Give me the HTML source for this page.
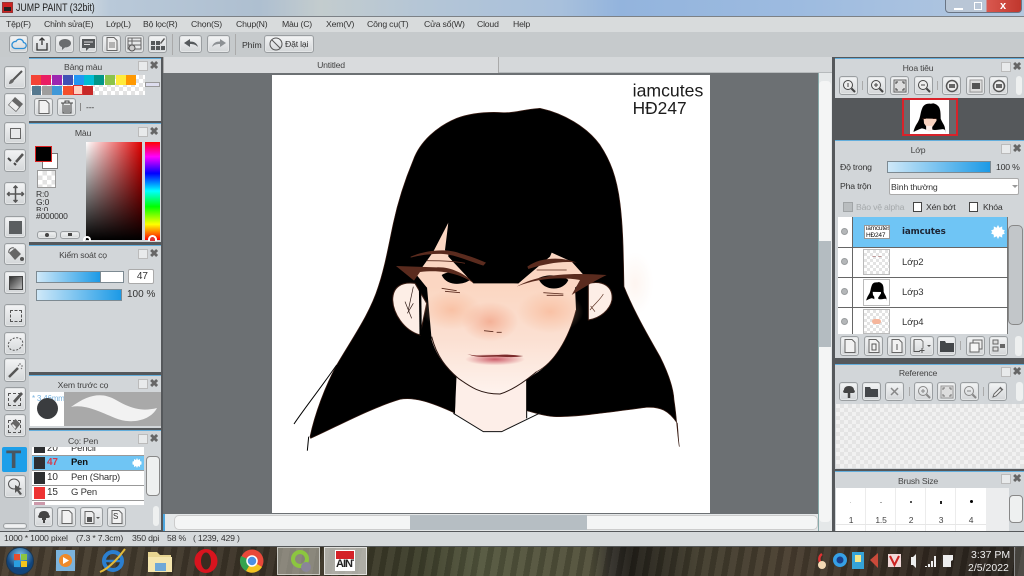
<!DOCTYPE html>
<html><head><meta charset="utf-8"><style>
*{box-sizing:border-box}
html,body{margin:0;padding:0;width:1024px;height:576px;overflow:hidden;background:#6c7073}
body{position:relative;font-family:"Liberation Sans",sans-serif;font-size:8.7px;letter-spacing:-.2px;color:#333;filter:blur(.3px)}
div,span,svg{position:absolute}
.b{border:1px solid #9a9ea1;border-radius:3px;background:linear-gradient(#f3f4f5,#d3d6d8);box-shadow:0 0 0 1px #e4e6e7 inset}
.t{white-space:nowrap}
.p{background:#d2d6d9;border-top:1px solid #63aedc}
.h{text-align:center;color:#444;white-space:nowrap}
.pi{width:10px;height:10px;border:1px solid #bbb;background:#e8eaeb}
.x{width:10px;height:10px;color:#666;font-size:11px;font-weight:bold;line-height:10px;text-align:center}
.ck{background:repeating-conic-gradient(#e3e3e3 0 25%,#fff 0 50%) 0 0/8px 8px}
.sl{border:1px solid #7d8a92;background:linear-gradient(90deg,#cfe8f8,#1c9ae6)}
.ln{width:1px;background:#aaa}
</style></head><body>

<!-- title bar -->
<div style="left:0;top:0;width:1024px;height:17px;background:linear-gradient(90deg,#cfd3d8 0,#c9d4dd 90px,#b9c9d9 110px,#aebfd0 260px,#c3ccce 320px,#b5c6d6 420px,#a8c0dc 560px,#93b4dd 620px,#9dbbe0 800px,#b4c8df 1024px);border-bottom:1px solid #7c8186"></div>
<div style="left:2px;top:2px;width:11px;height:11px;background:#c22;border:1px solid #933"></div>
<div style="left:4px;top:7px;width:7px;height:4px;background:#222"></div>
<div class="t" style="left:16px;top:2px;font-size:11px;letter-spacing:0;color:#222;transform:scaleX(.8);transform-origin:0 0">JUMP PAINT (32bit)</div>
<div style="left:945px;top:-1px;width:77px;height:14px;border:1px solid #6a7585;border-radius:0 0 4px 4px;background:linear-gradient(90deg,#b9c6d6 0,#b9c6d6 40px,#d9584f 41px,#c0372d 100%)"></div>
<div style="left:954px;top:8px;width:9px;height:2px;background:#fff"></div>
<div style="left:974px;top:2px;width:8px;height:8px;border:1px solid #fff"></div>
<div class="t" style="left:1000px;top:0;color:#fff;font-weight:bold;font-size:11px">x</div>

<!-- menu -->
<div style="left:0;top:17px;width:1024px;height:15px;background:#d8dbdc"></div>
<div class="t" style="left:6px;top:19px">Tệp(F)</div>
<div class="t" style="left:44px;top:19px">Chỉnh sửa(E)</div>
<div class="t" style="left:106px;top:19px">Lớp(L)</div>
<div class="t" style="left:143px;top:19px">Bộ lọc(R)</div>
<div class="t" style="left:191px;top:19px">Chọn(S)</div>
<div class="t" style="left:236px;top:19px">Chụp(N)</div>
<div class="t" style="left:282px;top:19px">Màu (C)</div>
<div class="t" style="left:326px;top:19px">Xem(V)</div>
<div class="t" style="left:367px;top:19px">Công cụ(T)</div>
<div class="t" style="left:424px;top:19px">Cửa sổ(W)</div>
<div class="t" style="left:477px;top:19px">Cloud</div>
<div class="t" style="left:513px;top:19px">Help</div>

<!-- toolbar -->
<div style="left:0;top:32px;width:1024px;height:25px;background:#c6cacc"></div>
<div class="b" style="left:9px;top:35px;width:19px;height:18px"><svg style="left:1px;top:2px" width="16" height="12" viewBox="0 0 16 12"><path d="M4 10.5h8a3 3 0 0 0 .5-6A4 4 0 0 0 5 3.5a3.3 3.3 0 0 0-1 7z" fill="none" stroke="#2f8fd6" stroke-width="1.3"/></svg></div>
<div class="b" style="left:32px;top:35px;width:19px;height:18px"><svg style="left:2px;top:1px" width="14" height="14" viewBox="0 0 14 14"><path d="M7 8V1M4.5 3.5L7 1l2.500 2.500M2 6v7h10V6" fill="none" stroke="#333" stroke-width="1.300"/></svg></div>
<div class="b" style="left:55px;top:35px;width:19px;height:18px"><svg style="left:2px;top:2px" width="14" height="13" viewBox="0 0 14 13"><path d="M7 1c3.500 0 6 1.800 6 4.200S10.500 9.400 7 9.400L4 12V9C2 8.400 1 7 1 5.200 1 2.800 3.500 1 7 1z" fill="#6a6d6f"/></svg></div>
<div class="b" style="left:79px;top:35px;width:18px;height:18px"><svg style="left:2px;top:2px" width="13" height="13" viewBox="0 0 13 13"><path d="M0 1h13v9H7l-3 3v-3H0z" fill="#55585a"/><path d="M2 4h9M2 6.500h6" stroke="#ddd"/></svg></div>
<div class="b" style="left:102px;top:35px;width:19px;height:18px"><svg style="left:3px;top:1px" width="12" height="14" viewBox="0 0 12 14"><path d="M1 .5h7l3 3v10H1z" fill="#eee" stroke="#666"/><path d="M3 6h6M3 8h6M3 10h6" stroke="#777"/></svg></div>
<div class="b" style="left:125px;top:35px;width:19px;height:18px"><svg style="left:1px;top:1px" width="16" height="15" viewBox="0 0 16 15"><path d="M1 1h13v11H1zM1 4h13M5 1v11M1 8h13" fill="#e6e8e9" stroke="#666"/><circle cx="5" cy="11" r="3" fill="#ccc" stroke="#555"/></svg></div>
<div class="b" style="left:148px;top:35px;width:19px;height:18px"><svg style="left:1px;top:1px" width="16" height="15" viewBox="0 0 16 15"><path d="M1 4h4v4H1zM6 4h4v4H6zM1 9h4v4H1zM6 9h4v4H6zM11 9h4v4h-4z" fill="#55585a"/><path d="M10 6l4-5 1 1-4 5z" fill="#555"/></svg></div>
<div class="ln" style="left:172px;top:34px;height:21px"></div>
<div class="b" style="left:179px;top:35px;width:23px;height:18px"><svg style="left:4px;top:3px" width="14" height="10" viewBox="0 0 14 10"><path d="M0 4L6 0v2.500c4 0 7 1.500 8 5.500-2-2-4-3-8-3V8z" fill="#55595c"/></svg></div>
<div class="b" style="left:207px;top:35px;width:23px;height:18px"><svg style="left:4px;top:3px" width="14" height="10" viewBox="0 0 14 10"><path d="M14 4L8 0v2.500C4 2.500 1 4 0 8c2-2 4-3 8-3v3z" fill="#8d9194"/></svg></div>
<div class="ln" style="left:235px;top:34px;height:21px"></div>
<div class="t" style="left:242px;top:40px">Phím</div>
<div class="b" style="left:264px;top:35px;width:50px;height:18px"><svg style="left:4px;top:1px" width="14" height="14" viewBox="0 0 14 14"><circle cx="7" cy="7" r="6" fill="none" stroke="#555"/><path d="M3 3l8 8" stroke="#555"/></svg><span class="t" style="left:20px;top:3px">Đặt lại</span></div>

<!-- left column -->
<div style="left:0;top:57px;width:29px;height:474px;background:#c7cbce"></div>
<div style="left:29px;top:57px;width:134px;height:474px;background:#55585b"></div>

<!-- tools -->
<div class="b" style="left:4px;top:66px;width:22px;height:23px"><svg style="left:1px;top:1px" width="19" height="19" viewBox="0 0 19 19"><path d="M7 12L16 3" stroke="#555" stroke-width="2"/><path d="M3 16c0-3 2-5 4-5l1 1c0 2-2 4-5 4z" fill="#666"/></svg></div>
<div class="b" style="left:4px;top:93px;width:22px;height:23px"><svg style="left:1px;top:2px" width="19" height="18" viewBox="0 0 19 18"><path d="M9 1l8 7-7 8-8-7z" fill="#666"/><path d="M6 5l7 6-3 4-7-6z" fill="#eee"/></svg></div>
<div class="b" style="left:4px;top:122px;width:22px;height:22px"><div style="left:5px;top:5px;width:11px;height:11px;border:1px solid #666;background:#e8e9ea"></div></div>
<div class="b" style="left:4px;top:149px;width:22px;height:23px"><svg style="left:1px;top:1px" width="19" height="19" viewBox="0 0 19 19"><path d="M2 7l3 3M8 12l2 2" stroke="#444" stroke-width="2"/><path d="M10 11l7-8" stroke="#555" stroke-width="2.500"/></svg></div>
<div class="b" style="left:4px;top:182px;width:22px;height:23px"><svg style="left:1px;top:2px" width="19" height="18" viewBox="0 0 19 18"><path d="M9.500 1v16M1.500 9h16M7.500 3l2-2 2 2M7.500 15l2 2 2-2M3.500 7l-2 2 2 2M15.500 7l2 2-2 2" fill="none" stroke="#555" stroke-width="1.500"/></svg></div>
<div class="b" style="left:4px;top:216px;width:22px;height:22px"><div style="left:4px;top:4px;width:13px;height:13px;background:#5b5e60"></div></div>
<div class="b" style="left:4px;top:243px;width:22px;height:22px"><svg style="left:1px;top:1px" width="19" height="19" viewBox="0 0 19 19"><path d="M3 8l6-5 6 6-6 6z" fill="#666"/><path d="M3 8c-1-3 2-6 5-5" fill="none" stroke="#555"/><circle cx="16" cy="14" r="2" fill="#555"/></svg></div>
<div class="b" style="left:4px;top:271px;width:22px;height:23px"><div style="left:4px;top:4px;width:14px;height:14px;background:linear-gradient(135deg,#333,#bbb);border:1px solid #444"></div></div>
<div class="b" style="left:4px;top:304px;width:22px;height:23px"><div style="left:5px;top:5px;width:12px;height:12px;border:1px dashed #555"></div></div>
<div class="b" style="left:4px;top:332px;width:22px;height:23px"><svg style="left:1px;top:2px" width="19" height="18" viewBox="0 0 19 18"><ellipse cx="9.500" cy="9" rx="7.500" ry="6" fill="none" stroke="#555" stroke-dasharray="2 1.500" transform="rotate(-25 9.500 9)"/></svg></div>
<div class="b" style="left:4px;top:358px;width:22px;height:24px"><svg style="left:1px;top:2px" width="19" height="19" viewBox="0 0 19 19"><path d="M3 16l9-9" stroke="#555" stroke-width="2.500"/><path d="M14 2v2M17 5h-2M13 5l-1-1M16 8l-1-1" stroke="#777"/></svg></div>
<div class="b" style="left:4px;top:387px;width:22px;height:24px"><div style="left:3px;top:5px;width:13px;height:13px;border:1px dashed #555"></div><svg style="left:5px;top:2px" width="15" height="15" viewBox="0 0 15 15"><path d="M3 11l8-9 2 2-8 9z" fill="#555"/></svg></div>
<div class="b" style="left:4px;top:414px;width:22px;height:23px"><div style="left:3px;top:5px;width:13px;height:13px;border:1px dashed #555"></div><svg style="left:4px;top:3px" width="13" height="13" viewBox="0 0 13 13"><path d="M6.500 1l5 5-5 6-5-6z" fill="#666"/><path d="M4 6l3 3-1 2-3-4z" fill="#eee"/></svg></div>
<div style="left:2px;top:447px;width:25px;height:25px;background:#1d9fe9;border-radius:2px"></div>
<div class="t" style="left:6px;top:446px;font:bold 25px 'Liberation Sans';color:#4a5660">T</div>
<div class="b" style="left:4px;top:475px;width:22px;height:23px"><svg style="left:1px;top:1px" width="19" height="19" viewBox="0 0 19 19"><ellipse cx="8" cy="7" rx="5.500" ry="5" fill="none" stroke="#555"/><path d="M9 8l7 4-3 1 3 4-2 1-3-4-2 2z" fill="#555"/></svg></div>
<div class="b" style="left:3px;top:523px;width:24px;height:6px;background:#f0f1f2"></div>

<!-- Bang mau -->
<div class="p" style="left:29px;top:58px;width:132px;height:63px"></div>
<div class="h" style="left:29px;top:62px;width:108px">Bảng màu</div>
<div class="pi" style="left:138px;top:61px"></div><div class="x" style="left:149px;top:61px">✖</div>
<div class="ck" style="left:31px;top:75px;width:114px;height:20px"></div>
<div style="left:31px;top:75px;width:10px;height:10px;background:#f44336"></div>
<div style="left:41px;top:75px;width:10px;height:10px;background:#e91e63"></div>
<div style="left:52px;top:75px;width:10px;height:10px;background:#9c27b0"></div>
<div style="left:63px;top:75px;width:10px;height:10px;background:#3f51b5"></div>
<div style="left:74px;top:75px;width:10px;height:10px;background:#2196f3"></div>
<div style="left:84px;top:75px;width:10px;height:10px;background:#00bcd4"></div>
<div style="left:94px;top:75px;width:10px;height:10px;background:#009688"></div>
<div style="left:105px;top:75px;width:10px;height:10px;background:#8bc34a"></div>
<div style="left:116px;top:75px;width:10px;height:10px;background:#ffeb3b"></div>
<div style="left:126px;top:75px;width:10px;height:10px;background:#ff9800"></div>
<div style="left:32px;top:86px;width:9px;height:9px;background:#54788f"></div>
<div style="left:42px;top:86px;width:10px;height:9px;background:#9e9e9e"></div>
<div style="left:52px;top:86px;width:10px;height:9px;background:#3f98d8"></div>
<div style="left:63px;top:86px;width:10px;height:9px;background:#f4502c"></div>
<div style="left:73px;top:85px;width:10px;height:10px;background:#ffd0c0;border:1px solid #d33"></div>
<div style="left:83px;top:86px;width:10px;height:9px;background:#c62828"></div>
<div style="left:145px;top:82px;width:15px;height:5px;background:#dde;border:1px solid #999"></div>
<div class="b" style="left:34px;top:98px;width:19px;height:18px"><svg style="left:3px;top:1px" width="12" height="14" viewBox="0 0 12 14"><path d="M1 .5h7l3 3v10H1z" fill="#f2f2f2" stroke="#666"/></svg></div>
<div class="b" style="left:57px;top:98px;width:19px;height:18px"><svg style="left:2px;top:1px" width="14" height="14" viewBox="0 0 14 14"><path d="M1 3h12M3 3v10h8V3M5 5v7M7 5v7M9 5v7M5 3V1h4v2" fill="none" stroke="#444"/></svg></div>
<div class="ln" style="left:80px;top:103px;height:8px;background:#888"></div>
<div class="t" style="left:86px;top:102px">---</div>

<!-- Mau -->
<div class="p" style="left:29px;top:123px;width:132px;height:119px"></div>
<div class="h" style="left:29px;top:128px;width:108px">Màu</div>
<div class="pi" style="left:138px;top:127px"></div><div class="x" style="left:149px;top:127px">✖</div>
<div style="left:42px;top:153px;width:16px;height:16px;background:#fff;border:1px solid #777"></div>
<div style="left:35px;top:146px;width:17px;height:16px;background:#000;border:1px solid #d22"></div>
<div class="ck" style="left:37px;top:170px;width:19px;height:18px;border:1px solid #999;background-size:9px 9px"></div>
<div class="t" style="left:36px;top:189px;font-size:8.500px">R:0</div>
<div class="t" style="left:36px;top:197px;font-size:8.500px">G:0</div>
<div class="t" style="left:36px;top:205px;font-size:8.500px;height:6px;overflow:hidden">B:0</div>
<div class="t" style="left:36px;top:211px;font-size:8.500px">#000000</div>
<div style="left:86px;top:142px;width:56px;height:98px;background:linear-gradient(to top,#000,rgba(0,0,0,0)),linear-gradient(to right,#fff,#e00000)"></div>
<div style="left:145px;top:142px;width:15px;height:98px;background:linear-gradient(#f00 0,#f0f 15%,#00f 32%,#0ff 50%,#0f0 66%,#ff0 84%,#f00 100%)"></div>
<div style="left:148px;top:235px;width:9px;height:6px;border:2px solid #fff;border-bottom:0;border-radius:5px 5px 0 0;background:#d33"></div>
<div style="left:83px;top:236px;width:8px;height:5px;border:2px solid #fff;border-bottom:0;border-radius:5px 5px 0 0"></div>
<div class="b" style="left:37px;top:231px;width:20px;height:8px"><div style="left:7px;top:1px;width:4px;height:4px;border-radius:50%;background:#444"></div></div>
<div class="b" style="left:60px;top:231px;width:20px;height:8px"><div style="left:7px;top:1px;width:4px;height:3px;background:#444"></div></div>

<!-- Kiem soat -->
<div class="p" style="left:29px;top:245px;width:132px;height:127px"></div>
<div class="h" style="left:29px;top:250px;width:108px">Kiểm soát cọ</div>
<div class="pi" style="left:138px;top:249px"></div><div class="x" style="left:149px;top:249px">✖</div>
<div style="left:36px;top:271px;width:88px;height:12px;background:#fff;border:1px solid #7d8a92"></div>
<div class="sl" style="left:36px;top:271px;width:65px;height:12px"></div>
<div style="left:128px;top:269px;width:26px;height:15px;background:#fff;border:1px solid #aaa;border-radius:2px;text-align:right;padding-right:5px;line-height:14px;font-size:10px;letter-spacing:0">47</div>
<div class="sl" style="left:36px;top:289px;width:86px;height:12px"></div>
<div class="t" style="left:127px;top:289px;font-size:10px;letter-spacing:0">100 %</div>

<!-- Xem truoc -->
<div class="p" style="left:29px;top:375px;width:132px;height:53px"></div>
<div class="h" style="left:29px;top:380px;width:108px">Xem trước cọ</div>
<div class="pi" style="left:138px;top:379px"></div><div class="x" style="left:149px;top:379px">✖</div>
<div style="left:64px;top:392px;width:97px;height:34px;background:#a9a9a9"></div>
<div style="left:30px;top:392px;width:34px;height:34px;background:#fff;overflow:hidden"></div>
<div class="t" style="left:32px;top:394px;color:#7ab3de;font-size:8px;width:32px;overflow:hidden">* 3.46mm</div>
<div style="left:37px;top:398px;width:21px;height:21px;border-radius:50%;background:#3a3c3f"></div>
<svg style="left:64px;top:392px" width="97" height="34" viewBox="0 0 97 34"><path d="M7 15C25 2 38 0 52 8s25 12 41 8c-6 12-25 17-42 10S20 12 7 15z" fill="#f2f2f2"/></svg>

<!-- Pen -->
<div class="p" style="left:29px;top:430px;width:132px;height:100px"></div>
<div class="h" style="left:29px;top:436px;width:108px">Cọ: Pen</div>
<div class="pi" style="left:138px;top:434px"></div><div class="x" style="left:149px;top:434px">✖</div>
<div style="left:32px;top:447px;width:112px;height:58px;background:#fff;overflow:hidden">
 <div style="left:2px;top:-5px;width:11px;height:11px;background:#2d2f31"></div>
 <div class="t" style="left:15px;top:-4px;font-size:10px">20</div><div class="t" style="left:39px;top:-4px;font-size:9.500px">Pencil</div>
 <div style="left:0;top:8px;width:112px;height:1px;background:#999"></div>
 <div style="left:0;top:9px;width:112px;height:14px;background:#6fc5f4"></div>
 <div style="left:2px;top:10px;width:11px;height:12px;background:#2d2f31"></div>
 <div class="t" style="left:15px;top:10px;font-size:10px;font-weight:bold;color:#d33c4c">47</div><div class="t" style="left:39px;top:10px;font-size:9.500px;font-weight:bold;color:#111">Pen</div>
 <svg style="left:100px;top:11px" width="10" height="10" viewBox="0 0 10 10"><path d="M5 0l1 2 2-1v2l2 1-1 1 1 1-2 1v2L6 8 5 10 4 8 2 9V7L0 6l1-1-1-1 2-1V1l2 1z" fill="#fff"/></svg>
 <div style="left:0;top:23px;width:112px;height:1px;background:#999"></div>
 <div style="left:2px;top:25px;width:11px;height:12px;background:#2d2f31"></div>
 <div class="t" style="left:15px;top:25px;font-size:10px">10</div><div class="t" style="left:39px;top:25px;font-size:9.500px">Pen (Sharp)</div>
 <div style="left:0;top:38px;width:112px;height:1px;background:#999"></div>
 <div style="left:2px;top:40px;width:11px;height:12px;background:#e33"></div>
 <div class="t" style="left:15px;top:40px;font-size:10px">15</div><div class="t" style="left:39px;top:40px;font-size:9.500px">G Pen</div>
 <div style="left:0;top:53px;width:112px;height:1px;background:#999"></div>
 <div style="left:2px;top:55px;width:11px;height:3px;background:#c9a"></div>
</div>
<div style="left:146px;top:456px;width:14px;height:40px;background:#eef0f0;border:1px solid #888;border-radius:4px"></div>
<div class="b" style="left:34px;top:507px;width:19px;height:20px"><svg style="left:2px;top:2px" width="14" height="14" viewBox="0 0 14 14"><path d="M7 1c3 0 5 1.500 5 4 1.500 1 1 3-1 3H3C1 8 .5 6 2 5c0-2.500 2-4 5-4z" fill="#444"/><path d="M7 13V7M5 9h4" stroke="#444" stroke-width="2"/></svg></div>
<div class="b" style="left:57px;top:507px;width:19px;height:20px"><svg style="left:3px;top:2px" width="12" height="14" viewBox="0 0 12 14"><path d="M1 .5h7l3 3v10H1z" fill="#f2f2f2" stroke="#666"/></svg></div>
<div class="b" style="left:80px;top:507px;width:23px;height:20px"><svg style="left:3px;top:3px" width="16" height="13" viewBox="0 0 16 13"><path d="M1 .5h7l2 2v10H1z" fill="#eee" stroke="#666"/><path d="M3 6h5v5H3z" fill="#555"/><path d="M12 6h4l-2 2z" fill="#555"/></svg></div>
<div class="b" style="left:107px;top:507px;width:19px;height:20px"><svg style="left:3px;top:2px" width="12" height="14" viewBox="0 0 12 14"><path d="M1 .5h7l3 3v10H1z" fill="#f2f2f2" stroke="#666"/></svg><span style="left:5px;top:4px;font-size:8px">S</span></div>
<div style="left:153px;top:506px;width:6px;height:20px;background:#eef0f0;border-radius:3px"></div>

<!-- tab and canvas -->
<div style="left:163px;top:57px;width:669px;height:16px;background:#d5d8da;border-bottom:1px solid #b6babc"></div>
<div style="left:163px;top:57px;width:336px;height:16px;background:#d9dbdd;border-right:1px solid #aaa;border-left:1px solid #aaa"></div>
<div class="h" style="left:163px;top:60px;width:336px">Untitled</div>
<div style="left:163px;top:73px;width:655px;height:441px;background:#6c7073"></div>
<div style="left:272px;top:75px;width:438px;height:438px;background:#fff"></div>

<svg style="left:270px;top:70px" width="450" height="450" viewBox="0 0 1350 1350">
<defs>
<radialGradient id="g1"><stop offset="0" stop-color="#f7b08c" stop-opacity=".6"/><stop offset=".55" stop-color="#f7b592" stop-opacity=".3"/><stop offset="1" stop-color="#f6b593" stop-opacity="0"/></radialGradient>
<radialGradient id="g2"><stop offset="0" stop-color="#f9dccb" stop-opacity=".28"/><stop offset="1" stop-color="#f9dccb" stop-opacity="0"/></radialGradient>
<radialGradient id="g3"><stop offset="0" stop-color="#c95060" stop-opacity=".9"/><stop offset="1" stop-color="#c95060" stop-opacity="0"/></radialGradient>
<radialGradient id="g4"><stop offset="0" stop-color="#f2a68a" stop-opacity=".8"/><stop offset="1" stop-color="#f5a98a" stop-opacity="0"/></radialGradient>
<linearGradient id="sk" x1="0" y1="0" x2="0" y2="1"><stop offset="0" stop-color="#fbd6c1"/><stop offset=".5" stop-color="#fbe0d2"/><stop offset="1" stop-color="#fef3ee"/></linearGradient>
</defs>
<ellipse cx="1095" cy="640" rx="55" ry="95" fill="url(#g2)"/>
<!-- hair -->
<path id="hair" d="M810 115C760 118 735 130 700 128C650 125 600 130 560 145C500 170 450 215 430 270C405 330 385 390 370 460C355 530 345 590 325 650C300 730 250 800 200 885C165 950 135 1030 120 1100L122 1105C200 1070 300 1015 390 988C430 980 480 995 556 1030L770 1022C800 1030 830 1040 860 1040C940 1040 1060 1020 1130 1012C1170 1010 1195 1020 1222 1060C1225 1095 1225 1110 1228 1130C1222 1095 1220 1040 1212 990C1210 950 1190 900 1170 860C1130 790 1090 720 1062 650C1060 560 1060 480 1050 400C1040 320 1020 270 990 225C950 170 880 130 810 115Z" fill="#000" stroke="#3a1d14" stroke-width="2"/>
<path d="M112 1142L116 1100M72 1062C100 1020 140 970 200 885" fill="none" stroke="#000" stroke-width="3"/>
<!-- ears -->
<path d="M435 640C395 635 368 650 368 690C370 730 400 780 450 795L470 700Z" fill="#fdeee6" stroke="#3a1d14" stroke-width="3"/>
<path d="M955 640C1000 630 1030 650 1026 690C1020 720 990 745 955 750Z" fill="#fdeee6" stroke="#3a1d14" stroke-width="3"/>
<path d="M405 695L425 745M412 730L430 700M430 650L415 720" stroke="#2a1510" stroke-width="2" fill="none"/>
<path d="M960 720C975 700 990 690 1000 672M962 708L975 725" stroke="#5a3020" stroke-width="2" fill="none"/>
<path d="M450 640L452 795" stroke="#000" stroke-width="7"/>
<path d="M938 700L942 770" stroke="#000" stroke-width="8"/>
<!-- neck -->
<path d="M558 900L555 1030L640 1085H700L770 1045V900Z" fill="#fdeee8"/>
<path d="M558 920L553 1030M770 930V1045" stroke="#000" stroke-width="3" fill="none"/>
<path d="M550 1030L640 1085H695L812 1028" stroke="#111" stroke-width="3" fill="none"/>
<!-- face -->
<path d="M470 640L485 810C500 860 530 895 565 925C600 955 630 970 650 972H700C730 960 760 935 790 915C850 880 895 810 918 720L915 650L740 640L600 640Z" fill="url(#sk)"/>
<path d="M485 800C500 860 530 895 565 925C600 950 630 972 690 972C730 960 770 930 800 905" fill="none" stroke="#2a1510" stroke-width="3"/>
<path d="M800 905C850 880 895 810 918 720" fill="none" stroke="#3a1d14" stroke-width="2"/>
<ellipse cx="545" cy="720" rx="90" ry="60" fill="url(#g1)"/>
<ellipse cx="840" cy="725" rx="100" ry="65" fill="url(#g1)"/>
<ellipse cx="660" cy="755" rx="85" ry="60" fill="url(#g4)"/>
<ellipse cx="675" cy="868" rx="90" ry="18" fill="url(#g3)"/>
<!-- eye skin -->
<path d="M535 458L490 545L440 615L470 652L600 650L610 640L535 560Z" fill="#fbd6c2"/>
<path d="M845 548L790 600L740 645L900 665L950 625L905 575Z" fill="#fbd6c2"/>
<path d="M535 458L525 540L600 630L745 640L840 560L845 548L900 380L500 380Z" fill="#000"/>
<!-- eyes -->
<path d="M515 615C535 600 575 605 600 630C580 645 530 650 515 615Z" fill="#000"/>
<path d="M805 625C830 610 880 615 895 630C880 665 820 665 805 625Z" fill="#000"/>
<!-- brows + lids -->
<path d="M422 560C470 540 530 535 570 550C600 558 630 570 648 578L640 587C600 575 560 555 520 552C490 550 450 555 422 563Z" fill="#5a2b1e"/>
<path d="M772 590C810 560 880 560 920 578C880 572 830 580 775 597Z" fill="#5a2b1e"/>
<path d="M378 588L500 592C540 590 585 610 612 640C570 612 520 598 450 606L432 632Z" fill="#5a2b1e"/>
<path d="M740 650C790 620 870 605 1010 615C960 640 930 660 905 675L930 630C870 620 800 625 740 650Z" fill="#5a2b1e"/>
<path d="M470 572C500 572 550 572 585 580M800 600H890M515 655L560 662M525 664L570 668M820 668L880 672M830 676H880M642 782L670 785M680 787H695" stroke="#5a2b1e" stroke-width="2.500" fill="none"/>
<!-- lips -->
<path d="M592 852C620 860 650 855 685 855C710 852 735 856 760 858C730 864 700 860 680 860C650 860 620 864 592 852Z" fill="#7a2a2a"/>
<text x="1088" y="80" font-family="'Liberation Sans',sans-serif" font-size="53" letter-spacing="0" fill="#1c1c1c">iamcutes</text>
<text x="1088" y="132" font-family="'Liberation Sans',sans-serif" font-size="52" letter-spacing="0" fill="#1c1c1c">HĐ247</text>
</svg>

<!-- scrollbars -->
<div style="left:818px;top:73px;width:14px;height:458px;background:#e5e8e9;border-left:1px solid #8aa"></div>
<div style="left:819px;top:81px;width:12px;height:441px;background:#f4f5f5;border-radius:4px"></div>
<div style="left:819px;top:241px;width:12px;height:106px;background:#b4bcc1"></div>
<div style="left:163px;top:514px;width:655px;height:17px;background:#e4e7e8;border-left:2px solid #4da6de"></div>
<div style="left:174px;top:515px;width:644px;height:15px;background:#f4f5f5;border-radius:5px;border:1px solid #ccc"></div>
<div style="left:410px;top:515px;width:177px;height:15px;background:#b6bec3"></div>

<!-- right side -->
<div style="left:832px;top:57px;width:192px;height:474px;background:#55585b"></div>
<!-- Hoa tieu -->
<div class="p" style="left:835px;top:58px;width:189px;height:40px"></div>
<div class="h" style="left:835px;top:63px;width:166px">Hoa tiêu</div>
<div class="pi" style="left:1001px;top:62px"></div><div class="x" style="left:1012px;top:62px">✖</div>
<div class="b" style="left:839px;top:76px;width:19px;height:19px"><svg style="left:2px;top:2px" width="14" height="14" viewBox="0 0 14 14"><circle cx="6" cy="6" r="4.500" fill="#eee" stroke="#444"/><path d="M9.500 9.500L13 13" stroke="#444" stroke-width="2"/><path d="M6 4v4" stroke="#444"/></svg></div>
<div class="ln" style="left:862px;top:81px;height:9px"></div>
<div class="b" style="left:867px;top:76px;width:19px;height:19px"><svg style="left:2px;top:2px" width="14" height="14" viewBox="0 0 14 14"><circle cx="6" cy="6" r="4.500" fill="#eee" stroke="#444"/><path d="M9.500 9.500L13 13" stroke="#444" stroke-width="2"/><path d="M6 4v4M4 6h4" stroke="#444"/></svg></div>
<div class="b" style="left:890px;top:76px;width:19px;height:19px"><svg style="left:2px;top:2px" width="14" height="14" viewBox="0 0 14 14"><path d="M1 1h12v12H1z" fill="#ddd" stroke="#666"/><path d="M3 5V3h2M9 3h2v2M11 9v2H9M5 11H3V9" fill="none" stroke="#444"/></svg></div>
<div class="b" style="left:914px;top:76px;width:19px;height:19px"><svg style="left:2px;top:2px" width="14" height="14" viewBox="0 0 14 14"><circle cx="6" cy="6" r="4.500" fill="#eee" stroke="#444"/><path d="M9.500 9.500L13 13" stroke="#444" stroke-width="2"/><path d="M4 6h4" stroke="#444"/></svg></div>
<div class="ln" style="left:937px;top:81px;height:9px"></div>
<div class="b" style="left:942px;top:76px;width:19px;height:19px"><svg style="left:2px;top:2px" width="14" height="14" viewBox="0 0 14 14"><circle cx="7" cy="7" r="5.500" fill="#eee" stroke="#555" stroke-width="1.500"/><path d="M4 5h6v4H4z" fill="#666"/></svg></div>
<div class="b" style="left:966px;top:76px;width:19px;height:19px"><svg style="left:2px;top:2px" width="14" height="14" viewBox="0 0 14 14"><path d="M1 1h12v12H1z" fill="#ddd" stroke="#999"/><path d="M3 4h8v6H3z" fill="#555"/></svg></div>
<div class="b" style="left:989px;top:76px;width:19px;height:19px"><svg style="left:2px;top:2px" width="14" height="14" viewBox="0 0 14 14"><circle cx="7" cy="7" r="5.500" fill="#eee" stroke="#555" stroke-width="1.500"/><path d="M4 5h6v4H4z" fill="#666"/></svg></div>
<div style="left:1016px;top:76px;width:6px;height:19px;background:#eef0f0;border-radius:3px"></div>
<!-- thumb -->
<div style="left:835px;top:98px;width:189px;height:41px;background:#55585b"></div>
<div style="left:902px;top:98px;width:56px;height:38px;background:#666a6d;border:2px solid #d8222a"></div>
<div style="left:910px;top:100px;width:39px;height:34px;background:#fff"></div>
<svg style="left:910px;top:100px" width="39" height="34" viewBox="0 0 1350 1180"><use href="#hair"/><path d="M470 640L485 810 565 925 650 972H700L790 915 918 720 915 650Z" fill="#fad3c0"/><path d="M558 900V1030L640 1085H700L770 1045V900Z" fill="#fdeee8"/><path d="M425 640h120v20H425zM790 640h120v20H790z" fill="#5a2b1e"/></svg>
<!-- Lop -->
<div class="p" style="left:835px;top:140px;width:189px;height:218px"></div>
<div class="h" style="left:835px;top:145px;width:166px">Lớp</div>
<div class="pi" style="left:1001px;top:144px"></div><div class="x" style="left:1012px;top:144px">✖</div>
<div class="t" style="left:840px;top:162px">Độ trong</div>
<div class="sl" style="left:887px;top:161px;width:104px;height:12px"></div>
<div class="t" style="left:996px;top:162px">100 %</div>
<div class="t" style="left:840px;top:181px">Pha trộn</div>
<div style="left:889px;top:178px;width:130px;height:17px;background:#fff;border:1px solid #aaa;border-radius:2px"><span class="t" style="left:1px;top:3px">Bình thường</span></div>
<div style="left:1012px;top:185px;border:3px solid transparent;border-top-color:#999"></div>
<div style="left:843px;top:202px;width:10px;height:10px;background:#b9bdbf;border:1px solid #a0a4a6"></div>
<div class="t" style="left:856px;top:202px;color:#a5a9ab">Bảo vệ alpha</div>
<div style="left:913px;top:202px;width:9px;height:10px;background:#fff;border:1px solid #444"></div>
<div class="t" style="left:926px;top:202px">Xén bớt</div>
<div style="left:969px;top:202px;width:9px;height:10px;background:#fff;border:1px solid #444"></div>
<div class="t" style="left:983px;top:202px">Khóa</div>

<div style="left:838px;top:217px;width:170px;height:117px;background:#fff;overflow:hidden;border-right:1px solid #777"></div>
<div style="left:852px;top:217px;width:155px;height:30px;background:#6fc5f5"></div>
<div style="left:852px;top:217px;width:1px;height:117px;background:#666"></div>
<div style="left:838px;top:247px;width:170px;height:1px;background:#666"></div>
<div style="left:838px;top:277px;width:170px;height:1px;background:#666"></div>
<div style="left:838px;top:307px;width:170px;height:1px;background:#666"></div>
<div style="left:841px;top:228px;width:7px;height:7px;border-radius:50%;background:#b4b7b9;border:1px solid #9a9d9f"></div>
<div style="left:841px;top:258px;width:7px;height:7px;border-radius:50%;background:#b4b7b9;border:1px solid #9a9d9f"></div>
<div style="left:841px;top:288px;width:7px;height:7px;border-radius:50%;background:#b4b7b9;border:1px solid #9a9d9f"></div>
<div style="left:841px;top:318px;width:7px;height:7px;border-radius:50%;background:#b4b7b9;border:1px solid #9a9d9f"></div>
<div style="left:864px;top:225px;width:26px;height:14px;background:#fff;border:1px solid #999;overflow:hidden;font-size:6.500px;line-height:6.500px;color:#111;padding-left:1px;white-space:nowrap">iamcutes<br>HĐ247</div>
<div class="ck" style="left:863px;top:249px;width:27px;height:26px;border:1px solid #bbb;background-size:6px 6px"></div>
<div class="t" style="left:872px;top:254px;color:#955;font-size:7px">~ ~</div>
<div style="left:863px;top:279px;width:27px;height:27px;background:#fff;border:1px solid #bbb"></div>
<svg style="left:864px;top:280px" width="25" height="25" viewBox="0 0 1350 1350"><use href="#hair"/><path d="M470 640L485 810 565 925 650 972H700L790 915 918 720 915 650Z" fill="#fff"/><path d="M558 900V1030L640 1085H700L770 1045V900Z" fill="#fff"/></svg>
<div class="ck" style="left:863px;top:309px;width:27px;height:25px;border:1px solid #bbb;background-size:6px 6px"></div>
<div style="left:872px;top:319px;width:9px;height:5px;background:#f5b59b;border-radius:3px"></div>
<div class="t" style="left:902px;top:227px;font-size:8.700px;letter-spacing:-.1px;font-weight:bold;color:#1c2433;font-family:'DejaVu Sans',sans-serif">iamcutes</div>
<div class="t" style="left:902px;top:257px;font-size:9.500px">Lớp2</div>
<div class="t" style="left:902px;top:287px;font-size:9.500px">Lớp3</div>
<div class="t" style="left:902px;top:317px;font-size:9.500px">Lớp4</div>
<svg style="left:991px;top:225px" width="14" height="14" viewBox="0 0 10 10"><path d="M5 0l1 2 2-1v2l2 1-1 1 1 1-2 1v2L6 8 5 10 4 8 2 9V7L0 6l1-1-1-1 2-1V1l2 1z" fill="#fff"/></svg>
<div style="left:1008px;top:225px;width:15px;height:100px;background:#c2c6c9;border:1px solid #888;border-radius:5px"></div>
<div class="b" style="left:840px;top:336px;width:19px;height:20px"><svg style="left:3px;top:2px" width="12" height="14" viewBox="0 0 12 14"><path d="M1 .5h7l3 3v10H1z" fill="#f2f2f2" stroke="#666"/></svg></div>
<div class="b" style="left:864px;top:336px;width:19px;height:20px"><svg style="left:3px;top:2px" width="12" height="14" viewBox="0 0 12 14"><path d="M1 .5h7l3 3v10H1z" fill="#f2f2f2" stroke="#666"/><path d="M4 5h4v6H4z" fill="none" stroke="#555"/></svg></div>
<div class="b" style="left:887px;top:336px;width:19px;height:20px"><svg style="left:3px;top:2px" width="12" height="14" viewBox="0 0 12 14"><path d="M1 .5h7l3 3v10H1z" fill="#f2f2f2" stroke="#666"/><path d="M6 5v6" stroke="#555"/></svg></div>
<div class="b" style="left:910px;top:336px;width:24px;height:20px"><svg style="left:2px;top:2px" width="19" height="15" viewBox="0 0 19 15"><path d="M1 .5h7l2 2v7" fill="none" stroke="#777"/><path d="M1 .5v12h6M9 9v5M6.500 11.500h5" fill="none" stroke="#555"/><path d="M14 6h4l-2 2z" fill="#555"/></svg></div>
<div class="b" style="left:937px;top:336px;width:19px;height:20px"><svg style="left:2px;top:3px" width="14" height="12" viewBox="0 0 14 12"><path d="M0 1h5l1 2h8v9H0z" fill="#44474a"/></svg></div>
<div class="ln" style="left:960px;top:341px;height:9px"></div>
<div class="b" style="left:966px;top:336px;width:19px;height:20px"><svg style="left:2px;top:2px" width="14" height="14" viewBox="0 0 14 14"><path d="M4 1h9v9H4z" fill="#eee" stroke="#666"/><path d="M1 4h9v9H1z" fill="#f5f5f5" stroke="#666"/></svg></div>
<div class="b" style="left:989px;top:336px;width:19px;height:20px"><svg style="left:2px;top:2px" width="14" height="14" viewBox="0 0 14 14"><path d="M1 1h5v4H1zM1 8h5v4H1z" fill="#ddd" stroke="#666"/><path d="M8 5h5v4H8z" fill="#666"/></svg></div>
<div style="left:1015px;top:336px;width:7px;height:20px;background:#eef0f0;border-radius:3px"></div>
<!-- Reference -->
<div class="p" style="left:835px;top:364px;width:189px;height:105px"></div>
<div class="h" style="left:835px;top:368px;width:166px">Reference</div>
<div class="pi" style="left:1001px;top:367px"></div><div class="x" style="left:1012px;top:367px">✖</div>
<div class="b" style="left:839px;top:382px;width:19px;height:19px"><svg style="left:2px;top:2px" width="14" height="14" viewBox="0 0 14 14"><path d="M7 1c3 0 5 1.500 5 4 1.500 1 1 3-1 3H3C1 8 .5 6 2 5c0-2.500 2-4 5-4z" fill="#444"/><path d="M7 13V7" stroke="#444" stroke-width="2.500"/></svg></div>
<div class="b" style="left:862px;top:382px;width:19px;height:19px"><svg style="left:2px;top:3px" width="14" height="11" viewBox="0 0 14 11"><path d="M0 1h5l1 2h7v8H0z" fill="#44474a"/></svg></div>
<div class="b" style="left:885px;top:382px;width:19px;height:19px"><svg style="left:4px;top:4px" width="9" height="9" viewBox="0 0 9 9"><path d="M1 1l7 7M8 1L1 8" stroke="#888" stroke-width="1.500"/></svg></div>
<div class="ln" style="left:909px;top:387px;height:9px"></div>
<div class="b" style="left:914px;top:382px;width:19px;height:19px"><svg style="left:2px;top:2px" width="14" height="14" viewBox="0 0 14 14"><circle cx="6" cy="6" r="4.500" fill="none" stroke="#888"/><path d="M9.500 9.500L13 13" stroke="#888" stroke-width="2"/><path d="M6 4v4M4 6h4" stroke="#888"/></svg></div>
<div class="b" style="left:937px;top:382px;width:19px;height:19px"><svg style="left:2px;top:2px" width="14" height="14" viewBox="0 0 14 14"><path d="M1 1h12v12H1z" fill="#ddd" stroke="#999"/><path d="M3 5V3h2M9 3h2v2M11 9v2H9M5 11H3V9" fill="none" stroke="#777"/></svg></div>
<div class="b" style="left:960px;top:382px;width:19px;height:19px"><svg style="left:2px;top:2px" width="14" height="14" viewBox="0 0 14 14"><circle cx="6" cy="6" r="4.500" fill="none" stroke="#888"/><path d="M9.500 9.500L13 13" stroke="#888" stroke-width="2"/><path d="M4 6h4" stroke="#888"/></svg></div>
<div class="ln" style="left:983px;top:387px;height:9px"></div>
<div class="b" style="left:988px;top:382px;width:19px;height:19px"><svg style="left:2px;top:2px" width="14" height="14" viewBox="0 0 14 14"><path d="M2 12l1-3 6-6 2 2-6 6z" fill="#eee" stroke="#666"/><path d="M9 2l3 3" stroke="#666"/></svg></div>
<div style="left:1016px;top:382px;width:7px;height:19px;background:#eef0f0;border-radius:3px"></div>
<div style="left:836px;top:404px;width:188px;height:64px;background:repeating-conic-gradient(#e4e4e4 0 25%,#f1f1f1 0 50%) 0 0/8px 8px"></div>
<!-- Brush size -->
<div class="p" style="left:835px;top:471px;width:189px;height:60px"></div>
<div class="h" style="left:835px;top:476px;width:166px">Brush Size</div>
<div class="pi" style="left:1001px;top:474px"></div><div class="x" style="left:1012px;top:474px">✖</div>
<div style="left:836px;top:488px;width:150px;height:43px;background:#fff"></div>
<div style="left:986px;top:488px;width:23px;height:43px;background:#ecedee"></div>
<div style="left:865px;top:488px;width:1px;height:43px;background:#ececec"></div>
<div style="left:895px;top:488px;width:1px;height:43px;background:#ececec"></div>
<div style="left:925px;top:488px;width:1px;height:43px;background:#ececec"></div>
<div style="left:955px;top:488px;width:1px;height:43px;background:#ececec"></div>
<div style="left:836px;top:524px;width:150px;height:1px;background:#e6e6e6"></div>
<div style="left:850px;top:502px;width:1px;height:1px;background:#ccc"></div>
<div style="left:880px;top:502px;width:2px;height:1px;background:#aaa"></div>
<div style="left:910px;top:501px;width:2px;height:2px;background:#555"></div>
<div style="left:940px;top:501px;width:2px;height:3px;background:#222"></div>
<div style="left:970px;top:500px;width:3px;height:3px;background:#000;border-radius:50%"></div>
<div class="h" style="left:836px;top:515px;width:30px;font-size:8.500px">1</div>
<div class="h" style="left:866px;top:515px;width:30px;font-size:8.500px">1.5</div>
<div class="h" style="left:896px;top:515px;width:30px;font-size:8.500px">2</div>
<div class="h" style="left:926px;top:515px;width:30px;font-size:8.500px">3</div>
<div class="h" style="left:956px;top:515px;width:30px;font-size:8.500px">4</div>
<div style="left:1009px;top:495px;width:14px;height:28px;background:#eef0f0;border:1px solid #888;border-radius:4px"></div>

<!-- status -->
<div style="left:0;top:531px;width:1024px;height:15px;background:#d6dadc;border-top:1px solid #55585b"></div>
<div class="t" style="left:4px;top:533px">1000 * 1000 pixel</div>
<div class="t" style="left:76px;top:533px">(7.3 * 7.3cm)</div>
<div class="t" style="left:132px;top:533px">350 dpi</div>
<div class="t" style="left:167px;top:533px">58 %</div>
<div class="t" style="left:193px;top:533px">( 1239, 429 )</div>

<!-- taskbar -->
<div style="left:0;top:546px;width:1024px;height:30px;border-top:1px solid #55585a;background:repeating-linear-gradient(100deg,rgba(0,0,0,.14) 0 6px,rgba(255,255,255,.03) 6px 13px),linear-gradient(90deg,#4a3f31 0,#463d2f 120px,#3a3226 280px,#3f402c 420px,#55583f 480px,#54523c 590px,#33302a 612px,#23201a 630px,#433e2e 700px,#4a3f31 790px,#362b22 900px,#2a2620 1024px)"></div>
<svg style="left:0;top:546px" width="1024" height="30" viewBox="0 0 1024 30">
<defs><radialGradient id="or" cy=".3"><stop offset="0" stop-color="#7cc4ea"/><stop offset="1" stop-color="#12457c"/></radialGradient></defs>
<circle cx="20" cy="15" r="13.500" fill="url(#or)" stroke="#1b3650"/>
<rect x="14" y="8" width="6" height="6" fill="#e84e2c"/><rect x="21" y="8" width="6" height="6" fill="#8cc63f"/><rect x="14" y="15" width="6" height="6" fill="#2a9fe0"/><rect x="21" y="15" width="6" height="6" fill="#f6c61c"/>
<rect x="56" y="4" width="19" height="21" fill="#7cb3dc"/><circle cx="65.500" cy="14.500" r="6.500" fill="#ee8a2a"/><path d="M63 11l6 3.500-6 3.500z" fill="#fff"/>
<circle cx="113" cy="15" r="9" fill="none" stroke="#2b7fd0" stroke-width="4"/><path d="M105 15h16" stroke="#2b7fd0" stroke-width="2.500"/><path d="M100 26C110 22 120 10 125 3" fill="none" stroke="#e2b93a" stroke-width="2"/>
<path d="M148 6h9l3 3h11v17h-23z" fill="#e8d591"/><rect x="148" y="11" width="24" height="15" fill="#f5e6ae"/><rect x="155" y="17" width="11" height="8" fill="#6ea8d8"/>
<ellipse cx="206" cy="15" rx="11.500" ry="12" fill="#d8141e"/><ellipse cx="206" cy="15" rx="5" ry="8.500" fill="#3a2b20"/>
<circle cx="252" cy="15" r="11.500" fill="#e8483a"/><path d="M252 15L262 21A11.500 11.500 0 0 1 246 25z" fill="#f3c422"/><path d="M252 15L246 25A11.500 11.500 0 0 1 241 10z" fill="#33a34f"/><circle cx="252" cy="15" r="5" fill="#4a8fe4" stroke="#fff" stroke-width="1.500"/>
<path d="M822 8a6 6 0 0 0 0 10" fill="none" stroke="#d33" stroke-width="2.500"/>
<circle cx="822" cy="19" r="4" fill="#f4d9b5"/>
<circle cx="840" cy="14" r="7" fill="#36a0e6"/><circle cx="840" cy="14" r="3.500" fill="#1b3f8b"/>
<rect x="852" y="6" width="12" height="17" fill="#35a3d8"/><rect x="855" y="9" width="6" height="7" fill="#f4e58a"/>
<path d="M870 14l8-7v15z" fill="#c94a3a"/>
<rect x="888" y="8" width="13" height="13" fill="#f1d8d8"/><path d="M890 10l4.500 9 4.500-9" fill="none" stroke="#c22" stroke-width="2"/>
<path d="M911 11h2l3-3v14l-3-3h-2z" fill="#eee"/>
<path d="M925 20h2v1h-2zM928 18h2v3h-2zM931 15h2v6h-2zM934 10h2v11h-2z" fill="#eee"/>
<path d="M943 9h10v5l-2 1v6h-8z" fill="#eee"/>
</svg>
<div style="left:277px;top:547px;width:43px;height:28px;background:rgba(200,200,190,.55);border:1px solid #c9c9c2"></div>
<svg style="left:290px;top:549px" width="24" height="24" viewBox="0 0 24 24"><circle cx="10" cy="10" r="7" fill="none" stroke="#8cc63f" stroke-width="4"/><circle cx="16" cy="18" r="5" fill="#8a8599"/></svg>
<div style="left:324px;top:547px;width:43px;height:28px;background:rgba(220,220,215,.7);border:1px solid #e0e0dc"></div>
<div style="left:335px;top:550px;width:20px;height:21px;background:#fff"></div>
<div style="left:336px;top:551px;width:18px;height:8px;background:#d42228"></div>
<div class="t" style="left:336px;top:558px;font:bold 11px 'Liberation Sans';color:#222;letter-spacing:-1px;width:18px;overflow:hidden">AINT</div>
<div class="t" style="left:971px;top:549px;color:#eee;font-size:10.500px;letter-spacing:0">3:37 PM</div>
<div class="t" style="left:968px;top:562px;color:#eee;font-size:10.500px;letter-spacing:0">2/5/2022</div>
<div style="left:1014px;top:547px;width:10px;height:29px;background:rgba(255,255,255,.15);border-left:1px solid #888"></div>
</body></html>
